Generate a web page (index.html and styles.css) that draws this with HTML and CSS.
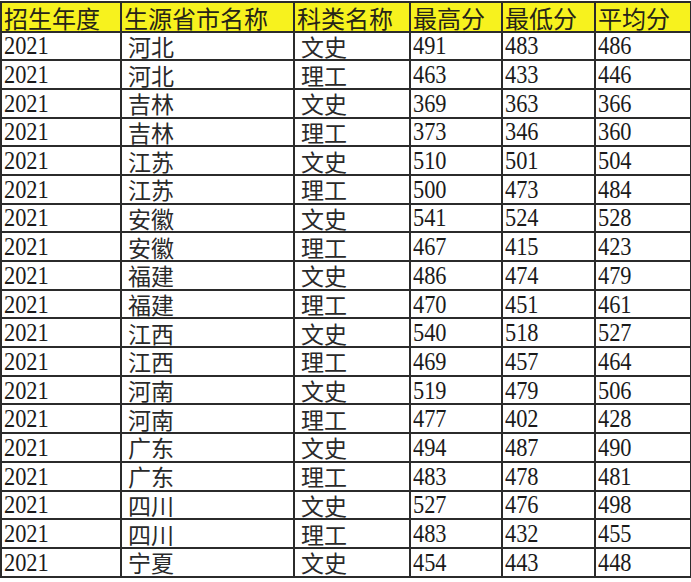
FILE: index.html
```html
<!DOCTYPE html>
<html lang="en">
<head>
<meta charset="utf-8">
<title>录取分数</title>
<link rel="stylesheet" href="styles.css">
</head>
<body>
<table class="scores">
  <colgroup>
    <col class="c1"><col class="c2"><col class="c3"><col class="c4"><col class="c5"><col class="c6">
  </colgroup>
  <thead>
    <tr class="head"><th>招生年度</th><th>生源省市名称</th><th>科类名称</th><th>最高分</th><th>最低分</th><th>平均分</th></tr>
  </thead>
  <tbody>
    <tr><td><span class="n">2021</span></td><td class="z">河北</td><td class="z">文史</td><td><span class="n">491</span></td><td><span class="n">483</span></td><td><span class="n">486</span></td></tr>
    <tr><td><span class="n">2021</span></td><td class="z">河北</td><td class="z">理工</td><td><span class="n">463</span></td><td><span class="n">433</span></td><td><span class="n">446</span></td></tr>
    <tr><td><span class="n">2021</span></td><td class="z">吉林</td><td class="z">文史</td><td><span class="n">369</span></td><td><span class="n">363</span></td><td><span class="n">366</span></td></tr>
    <tr><td><span class="n">2021</span></td><td class="z">吉林</td><td class="z">理工</td><td><span class="n">373</span></td><td><span class="n">346</span></td><td><span class="n">360</span></td></tr>
    <tr><td><span class="n">2021</span></td><td class="z">江苏</td><td class="z">文史</td><td><span class="n">510</span></td><td><span class="n">501</span></td><td><span class="n">504</span></td></tr>
    <tr><td><span class="n">2021</span></td><td class="z">江苏</td><td class="z">理工</td><td><span class="n">500</span></td><td><span class="n">473</span></td><td><span class="n">484</span></td></tr>
    <tr><td><span class="n">2021</span></td><td class="z">安徽</td><td class="z">文史</td><td><span class="n">541</span></td><td><span class="n">524</span></td><td><span class="n">528</span></td></tr>
    <tr><td><span class="n">2021</span></td><td class="z">安徽</td><td class="z">理工</td><td><span class="n">467</span></td><td><span class="n">415</span></td><td><span class="n">423</span></td></tr>
    <tr><td><span class="n">2021</span></td><td class="z">福建</td><td class="z">文史</td><td><span class="n">486</span></td><td><span class="n">474</span></td><td><span class="n">479</span></td></tr>
    <tr><td><span class="n">2021</span></td><td class="z">福建</td><td class="z">理工</td><td><span class="n">470</span></td><td><span class="n">451</span></td><td><span class="n">461</span></td></tr>
    <tr><td><span class="n">2021</span></td><td class="z">江西</td><td class="z">文史</td><td><span class="n">540</span></td><td><span class="n">518</span></td><td><span class="n">527</span></td></tr>
    <tr><td><span class="n">2021</span></td><td class="z">江西</td><td class="z">理工</td><td><span class="n">469</span></td><td><span class="n">457</span></td><td><span class="n">464</span></td></tr>
    <tr><td><span class="n">2021</span></td><td class="z">河南</td><td class="z">文史</td><td><span class="n">519</span></td><td><span class="n">479</span></td><td><span class="n">506</span></td></tr>
    <tr><td><span class="n">2021</span></td><td class="z">河南</td><td class="z">理工</td><td><span class="n">477</span></td><td><span class="n">402</span></td><td><span class="n">428</span></td></tr>
    <tr><td><span class="n">2021</span></td><td class="z">广东</td><td class="z">文史</td><td><span class="n">494</span></td><td><span class="n">487</span></td><td><span class="n">490</span></td></tr>
    <tr><td><span class="n">2021</span></td><td class="z">广东</td><td class="z">理工</td><td><span class="n">483</span></td><td><span class="n">478</span></td><td><span class="n">481</span></td></tr>
    <tr><td><span class="n">2021</span></td><td class="z">四川</td><td class="z">文史</td><td><span class="n">527</span></td><td><span class="n">476</span></td><td><span class="n">498</span></td></tr>
    <tr><td><span class="n">2021</span></td><td class="z">四川</td><td class="z">理工</td><td><span class="n">483</span></td><td><span class="n">432</span></td><td><span class="n">455</span></td></tr>
    <tr><td><span class="n">2021</span></td><td class="z">宁夏</td><td class="z">文史</td><td><span class="n">454</span></td><td><span class="n">443</span></td><td><span class="n">448</span></td></tr>
  </tbody>
</table>
</body>
</html>
```
FILE: styles.css
```css
html, body {
  margin: 0;
  padding: 0;
  background: #ffffff;
}
body {
  padding-top: 1px;
}
.scores {
  border-collapse: collapse;
  table-layout: fixed;
  width: 690px;
  color: #1a1a1a;
}
.c1 { width: 120px; }
.c2 { width: 173px; }
.c3 { width: 116px; }
.c4 { width: 92px; }
.c5 { width: 93px; }
.c6 { width: 96px; }
.scores tr {
  height: 28.7px;
}
.scores tr.head {
  height: 29.5px;
}
.scores th,
.scores td {
  border: 2px solid #2b2b2b;
  padding: 0 0 0 2px;
  text-align: left;
  white-space: nowrap;
  overflow: hidden;
  vertical-align: middle;
}
.scores th {
  background: #f7f21e;
  font-family: "Noto Sans CJK SC", "Noto Sans", sans-serif;
  font-weight: normal;
  font-size: 24px;
  line-height: 25px;
  padding-top: 1px;
  color: #262418;
}
.scores td {
  font-family: "Liberation Serif", serif;
  font-size: 26px;
  line-height: 24px;
  padding-top: 1px;
}
.scores td.z {
  font-family: "Noto Sans CJK SC", sans-serif;
  font-size: 23px;
  line-height: 24px;
  padding-left: 6px;
  padding-top: 0;
  color: #2a2a2a;
}
.n {
  display: inline-block;
  font-family: "Liberation Serif", serif;
  font-size: 26px;
  line-height: 24px;
  transform: scaleX(0.86);
  transform-origin: left center;
}
```
